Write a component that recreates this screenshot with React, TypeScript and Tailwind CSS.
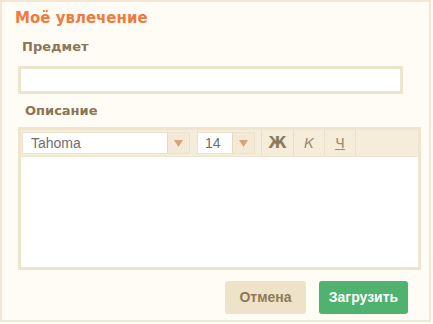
import React from "react";

export default function App() {
  const font = { fontFamily: "Tahoma, 'DejaVu Sans', 'Liberation Sans', sans-serif" };
  const arial = { fontFamily: "'Liberation Sans', Arial, sans-serif" };
  return (
    <div className="w-[433px] h-[324px] bg-white" style={font}>
      <div className="w-[431px] h-[322px] border-2 border-[#f2e7d2] bg-[#fffcf5] flex flex-col">
        <div className="pl-[13px] pt-[6px] text-[15px] leading-[20px] font-bold text-[#f07a3e]">Моё увлечение</div>
        <div className="pl-[20px] pt-[11px] text-[13px] leading-[16px] font-bold text-[#8b7456]">Предмет</div>
        <div className="ml-[16px] mt-[11px] w-[385px] h-[28px] border-[3px] border-[#efe4cd] bg-white" />
        <div className="pl-[23px] pt-[9px] text-[13px] leading-[16px] font-bold text-[#8b7456]">Описание</div>
        <div className="ml-[16px] mt-[8px] w-[403px] h-[143px] border-[3px] border-[#efe4cd] bg-white flex flex-col">
          <div className="h-[27px] bg-[#f5ecda] flex items-center border-b border-[#efe4cd]">
            <div className="ml-[1px] h-[22px] w-[168px] flex border border-[#ede2ca]">
              <div className="flex-1 bg-white text-[14px] text-[#6e6e6e] pl-[8px] leading-[20px]" style={arial}>Tahoma</div>
              <div className="w-[22px] bg-[#f3e9d6] border-l border-[#e6d9bd] flex items-center justify-center">
                <svg width="9" height="7" viewBox="0 0 9 7"><path d="M0 0 H9 L4.5 7 Z" fill="#d4a47a" /></svg>
              </div>
            </div>
            <div className="ml-[7px] h-[22px] w-[58px] flex border border-[#ede2ca]">
              <div className="flex-1 bg-white text-[14px] text-[#6e6e6e] pl-[7px] leading-[20px]" style={arial}>14</div>
              <div className="w-[22px] bg-[#f3e9d6] border-l border-[#e6d9bd] flex items-center justify-center">
                <svg width="9" height="7" viewBox="0 0 9 7"><path d="M0 0 H9 L4.5 7 Z" fill="#d4a47a" /></svg>
              </div>
            </div>
            <div className="ml-[6px] h-full w-[1px] bg-[#ebdfc6]" />
            <div className="w-[31px] h-full flex items-center justify-center text-[15px] font-bold text-[#8c7a5c]" style={{ fontFamily: "'DejaVu Sans', sans-serif" }}>Ж</div>
            <div className="h-full w-[1px] bg-[#ebdfc6]" />
            <div className="w-[30px] h-full flex items-center justify-center text-[14px] italic text-[#9a8a6e]" style={{ fontFamily: "'DejaVu Sans', sans-serif" }}>К</div>
            <div className="h-full w-[1px] bg-[#ebdfc6]" />
            <div className="w-[30px] h-full flex items-center justify-center text-[14px] underline text-[#9a8a6e]" style={{ fontFamily: "'DejaVu Sans', sans-serif" }}>Ч</div>
            <div className="h-full w-[1px] bg-[#ebdfc6]" />
          </div>
          <div className="flex-1 bg-white" />
        </div>
        <div className="flex justify-end gap-[13px] mt-[11px] mr-[21px]" style={arial}>
          <div className="w-[81px] h-[33px] rounded-[3px] bg-[#eee2c8] text-[#8d7a58] text-[14px] font-bold flex items-center justify-center">Отмена</div>
          <div className="w-[89px] h-[33px] rounded-[3px] bg-[#4fb26e] text-white text-[14px] font-bold flex items-center justify-center">Загрузить</div>
        </div>
      </div>
    </div>
  );
}
